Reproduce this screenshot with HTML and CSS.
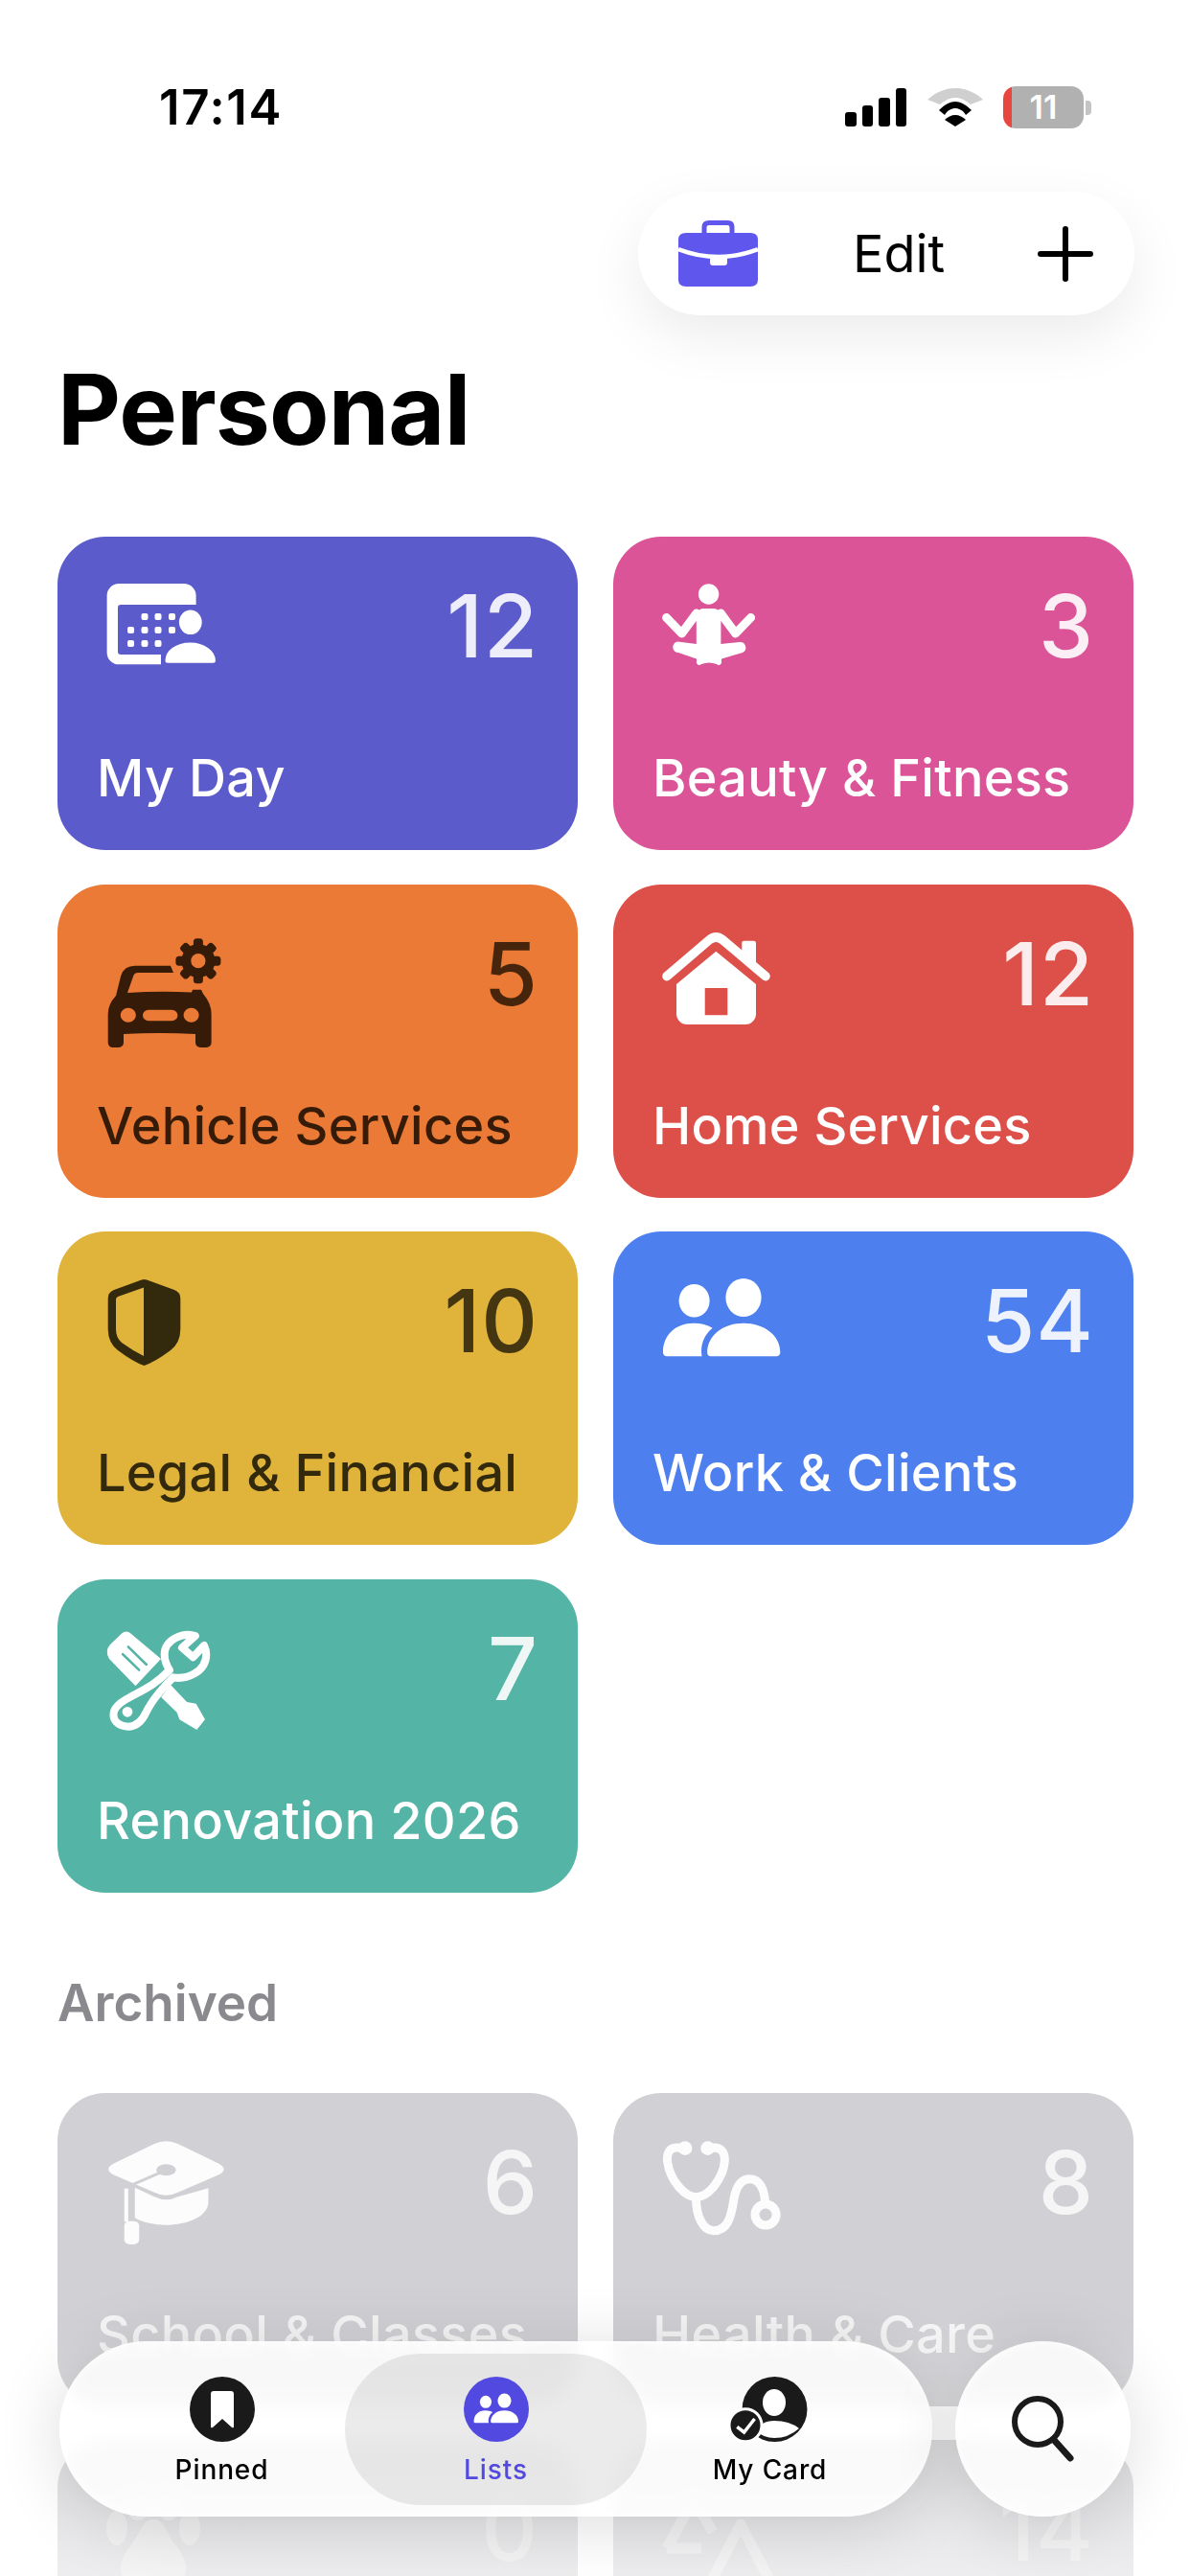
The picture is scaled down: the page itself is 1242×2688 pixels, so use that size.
FILE: index.html
```html
<!DOCTYPE html>
<html lang="en">
<head>
    <meta charset="UTF-8">
    <meta name="viewport" content="width=device-width, initial-scale=1.0">
    <title>Personal</title>
    <link rel="stylesheet" href="styles.css">
</head>
<body>
<div class="page">
    <header class="status">
        <span class="clock">17:14</span>
        <div class="signal"><i></i><i></i><i></i><i></i></div>
        <svg class="wifi" width="58" height="40" viewBox="0 0 58 40">
            <path fill="#cfcfcf" d="M0 12 C10 3 20 0 29 0 C38 0 48 3 58 12 L45 17 C38 11 33 10 29 10 C25 10 20 11 13 17Z"/>
            <path d="M12 23 C18 17 24 14 29 14 C34 14 40 17 46 23 L40 28 C37 23 33 21 29 21 C25 21 21 23 18 28Z"/>
            <path d="M29 28 C33 28 37 30 40 33 L29 40 L18 33 C21 30 25 28 29 28Z"/>
        </svg>
        <div class="battery"><span>11</span></div>
        <div class="battery-nub"></div>
    </header>

    <div class="toolbar">
        <div class="toolbar-pill">
            <svg class="case" width="83" height="69" viewBox="0 0 83 69">
                <path fill="none" stroke="#5f56ee" stroke-width="5" d="M27 14 V7 Q27 2.5 32 2.5 H51 Q56 2.5 56 7 V14"/>
                <path fill="#5f56ee" d="M0 20 Q0 13 8 13 H75 Q83 13 83 20 V62 Q83 69 75 69 H8 Q0 69 0 62Z"/>
                <path fill="none" stroke="#fff" stroke-width="4.5" d="M0 30 Q41.5 46 83 30"/>
                <rect x="33" y="36" width="18" height="11" rx="3" fill="#fff"/>
            </svg>
            <span class="edit">Edit</span>
            <svg class="plus" width="58" height="58" viewBox="0 0 58 58">
                <path fill="none" stroke="#000" stroke-width="6" stroke-linecap="round" d="M29 3 V55 M3 29 H55"/>
            </svg>
        </div>
    </div>

    <h1>Personal</h1>

    <section class="grid">
        <div class="card indigo">
            <div class="card-top">
                <svg class="icon" viewBox="0 0 150 130">
                    <path fill="currentColor" d="M24 9 H92 a12.6 12.6 0 0 1 12.6 12.6 V31 H26 a3 3 0 0 0 -3 3 V80 a3 3 0 0 0 3 3 H68 V93.3 H24 a12.4 12.4 0 0 1 -12.4 -12.4 V21.4 A12.4 12.4 0 0 1 24 9Z"/>
                    <g fill="currentColor">
                        <rect x="47.5" y="40" width="7" height="7" rx="2"/><rect x="61.5" y="40" width="7" height="7" rx="2"/><rect x="76" y="40" width="7" height="7" rx="2"/>
                        <rect x="33" y="54" width="7" height="7" rx="2"/><rect x="47.5" y="54" width="7" height="7" rx="2"/><rect x="61.5" y="54" width="7" height="7" rx="2"/><rect x="76" y="54" width="7" height="7" rx="2"/>
                        <rect x="33" y="68" width="7" height="7" rx="2"/><rect x="47.5" y="68" width="7" height="7" rx="2"/><rect x="61.5" y="68" width="7" height="7" rx="2"/>
                    </g>
                    <ellipse cx="98.8" cy="49.3" rx="13.4" ry="14.3" fill="currentColor" class="halo"/>
                    <path fill="currentColor" class="halo" d="M75 93.3 a4 4 0 0 1 -4 -4 C71 78 83 69 98.5 69 C114 69 126.4 78 126.4 89.3 a4 4 0 0 1 -4 4Z"/>
                </svg>
                <span class="count">12</span>
            </div>
            <span class="label">My Day</span>
        </div>

        <div class="card pink">
            <div class="card-top">
                <svg class="icon" viewBox="0 0 150 130">
                    <circle cx="59.6" cy="20" r="10.7" fill="currentColor"/>
                    <path fill="none" stroke="currentColor" stroke-width="9" stroke-linecap="round" stroke-linejoin="round" d="M15.6 44.5 L31.5 61 L47 40 M103.6 44.5 L87.7 61 L72.2 40"/>
                    <path fill="currentColor" d="M46.8 40 Q50 35 54 35 H65 Q69 35 72.4 40 V72 L92 70 a5.8 5.8 0 0 1 3 11 L73 87.5 V90 a3 3 0 0 1 -5 3 Q60 90 52 93 a3 3 0 0 1 -5 -3 V87.5 L28 81 a5.8 5.8 0 0 1 -1 -11.5 L46.8 72Z"/>
                </svg>
                <span class="count">3</span>
            </div>
            <span class="label">Beauty &amp; Fitness</span>
        </div>

        <div class="card orange">
            <div class="card-top">
                <svg class="icon" viewBox="0 0 150 130">
                    <g fill="currentColor">
                        <rect x="101.9" y="16.2" width="10" height="47" rx="3.5"/>
                        <rect x="101.9" y="16.2" width="10" height="47" rx="3.5" transform="rotate(45 106.9 39.7)"/>
                        <rect x="101.9" y="16.2" width="10" height="47" rx="3.5" transform="rotate(90 106.9 39.7)"/>
                        <rect x="101.9" y="16.2" width="10" height="47" rx="3.5" transform="rotate(135 106.9 39.7)"/>
                        <circle cx="106.9" cy="39.7" r="17.5"/>
                    </g>
                    <circle cx="106.9" cy="39.7" r="7.6" class="hole"/>
                    <path fill="currentColor" fill-rule="evenodd" d="M21 76 L26 56 Q29 44.7 41 44.7 H78 L81 52 H44 Q40 52 39 56 L33 73 Q66 71 100 72.5 L101 69.7 H110 L112 74 Q120.6 84 120.6 95 V125 a5 5 0 0 1 -5 5 H109 a5 5 0 0 1 -5 -5 V116 Q66 114 29 116 V125 a5 5 0 0 1 -5 5 H18 a5 5 0 0 1 -5.3 -5 V95 Q12.7 85 21 76Z M33.8 88.8 a8 7.5 0 1 0 .01 0Z M99.6 88.8 a8 7.5 0 1 0 .01 0Z M55 90.7 H79.4 a6 5.8 0 0 1 0 11.6 H55 a6 5.8 0 0 1 0 -11.6Z"/>
                </svg>
                <span class="count">5</span>
            </div>
            <span class="label">Vehicle Services</span>
        </div>

        <div class="card red">
            <div class="card-top">
                <svg class="icon" viewBox="0 0 150 130">
                    <path fill="none" stroke="currentColor" stroke-width="9.5" stroke-linecap="round" stroke-linejoin="round" d="M16 55.7 L60 18 Q67.3 12 74.6 18 L119 55.7"/>
                    <path fill="currentColor" d="M94.3 24 V21 Q94.3 18.7 97 18.7 H106.5 Q109 18.7 109 21 V44 L94.3 32Z"/>
                    <path fill="currentColor" fill-rule="evenodd" d="M67.3 29.7 L109 64 V95 a11 11 0 0 1 -11 11 H37 a11 11 0 0 1 -11 -11 V64Z M55.7 68 V96.3 H79.3 V68Z"/>
                </svg>
                <span class="count">12</span>
            </div>
            <span class="label">Home Services</span>
        </div>

        <div class="card yellow">
            <div class="card-top">
                <svg class="icon" viewBox="0 0 150 130">
                    <path fill="currentColor" fill-rule="evenodd" d="M50.3 10 Q53 10 56 11.5 L82 21 Q88.3 23.5 88.3 30 V62 Q88.3 76 78 84 Q62 96 50.3 100 Q39 96 23 84 Q12.7 76 12.7 62 V30 Q12.7 23.5 19 21 L45 11.5 Q48 10 50.3 10Z M50 18.5 L23 28 Q21 29 21 31 V62 Q21 71 27 76 Q38 84 50 90Z"/>
                </svg>
                <span class="count">10</span>
            </div>
            <span class="label">Legal &amp; Financial</span>
        </div>

        <div class="card blue">
            <div class="card-top">
                <svg class="icon" viewBox="0 0 150 130">
                    <g id="people" fill="currentColor">
                        <ellipse cx="44.6" cy="32.3" rx="16" ry="17.3"/>
                        <ellipse cx="96" cy="29" rx="18.6" ry="20"/>
                        <path d="M62 90.3 a4 4 0 0 1 -3.8 -4 C58.2 68 75 55.7 96 55.7 C117 55.7 134.3 68 134.3 86 a4 4 0 0 1 -4 4.3Z"/>
                        <path d="M12 86 C12 68 25 55.7 44 55.7 C52 55.7 58 57.5 63.6 60.7 C55 68 50.5 78 52.5 90.3 H16 a4 4 0 0 1 -4 -4.3Z"/>
                    </g>
                </svg>
                <span class="count">54</span>
            </div>
            <span class="label">Work &amp; Clients</span>
        </div>

        <div class="card teal">
            <div class="card-top">
                <svg class="icon" viewBox="0 0 150 130">
                    <path fill="currentColor" d="M15 28 L27 16.5 Q32 12.5 37 17 L68 43 L41.4 71.3 L14 43 Q9 35 15 28Z"/>
                    <path fill="currentColor" d="M77.8 69.7 L95 88 L104.6 89.7 L114 106.3 L105.3 117 L87.3 106.3 L84.7 99 L68.2 83Z"/>
                    <path fill="none" class="cut" stroke-width="2.5" stroke-linecap="round" d="M28 38 L45.2 54.7 M33.8 30.3 L52.9 49"/>
                    <g transform="translate(-60 -57) scale(.3827 .3333)">
                        <path class="wrench" stroke-linejoin="round" d="M428 228 C395 215 345 240 344 285 C344 310 352 325 358 335 C320 380 290 395 250 420 C215 440 205 460 205 475 C205 500 225 512 245 512 C270 512 285 490 295 465 C310 430 335 395 368 358 C400 365 458 345 458 285 C458 275 455 265 452 258 L422 295 L392 265Z"/>
                        <ellipse cx="243" cy="466" rx="14" ry="16" fill="currentColor"/>
                    </g>
                </svg>
                <span class="count">7</span>
            </div>
            <span class="label">Renovation 2026</span>
        </div>
    </section>

    <h2>Archived</h2>

    <section class="grid">
        <div class="card grey">
            <div class="card-top">
                <svg class="icon" viewBox="0 0 150 130">
                    <g transform="translate(-100 -63) scale(.408 .3333)" fill="currentColor">
                        <path d="M395 228 Q425 212 455 228 L560 290 Q585 307 560 325 L455 380 Q425 398 395 380 L290 325 Q265 307 290 290Z"/>
                        <path class="cut-line" d="M425 310 L335 358"/>
                        <ellipse cx="425" cy="310" rx="25" ry="18" class="hole"/>
                        <path d="M345 365 L395 394 Q425 412 455 394 L533 367 V410 C533 455 480 482 425 482 C395 482 365 475 345 460Z"/>
                        <rect x="318" y="368" width="10" height="104"/>
                        <rect x="318" y="470" width="38" height="73" rx="14"/>
                    </g>
                </svg>
                <span class="count">6</span>
            </div>
            <span class="label">School &amp; Classes</span>
        </div>

        <div class="card grey">
            <div class="card-top">
                <svg class="icon" viewBox="0 0 150 130">
                    <g transform="translate(-78 -63) scale(.408 .3333)">
                        <path class="line" d="M262 240 H255 C235 240 230 260 232 285 C238 340 275 395 305 395 C340 395 375 330 378 285 C380 255 370 240 350 240 M305 395 C305 460 325 500 350 500 C385 500 395 460 402 400 C408 360 420 338 442 338 C468 338 480 370 482 415"/>
                        <ellipse class="line" cx="483" cy="450" rx="27" ry="33"/>
                        <ellipse cx="277" cy="242" rx="18" ry="22" fill="currentColor"/>
                        <ellipse cx="335" cy="242" rx="18" ry="22" fill="currentColor"/>
                    </g>
                </svg>
                <span class="count">8</span>
            </div>
            <span class="label">Health &amp; Care</span>
        </div>

        <div class="card grey under">
            <div class="card-top">
                <svg class="icon" viewBox="0 0 150 130">
                    <g fill="currentColor">
                        <ellipse cx="22" cy="52" rx="11" ry="18"/>
                        <ellipse cx="98" cy="52" rx="11" ry="18"/>
                        <ellipse cx="44" cy="27" rx="12" ry="17"/>
                        <ellipse cx="76" cy="27" rx="12" ry="17"/>
                        <path d="M60 43 C72 43 74 58 82 68 C90 78 94 86 94 94 C94 108 82 114 60 114 C38 114 26 108 26 94 C26 86 30 78 38 68 C46 58 48 43 60 43Z"/>
                    </g>
                </svg>
                <span class="count">0</span>
            </div>
        </div>

        <div class="card grey under">
            <div class="card-top">
                <svg class="icon" viewBox="0 0 150 130">
                    <path class="tent" d="M16 73 L44 22 L64 56 M16 73 H52 M93 48 L62 108 H124Z"/>
                </svg>
                <span class="count">14</span>
            </div>
        </div>
    </section>

    <div class="fade"></div>

    <nav class="tabbar">
        <div class="tabs">
            <div class="tab">
                <svg width="68" height="68" viewBox="0 0 68 68">
                    <circle cx="34" cy="34" r="34" fill="#1a1a1a"/>
                    <path fill="#fff" d="M22 18 Q22 15 25 15 H43 Q46 15 46 18 V52 Q46 54 44 53 L34 44 L24 53 Q22 54 22 52Z"/>
                </svg>
                <span>Pinned</span>
            </div>
            <div class="tab tab-on">
                <svg width="68" height="68" viewBox="0 0 68 68">
                    <circle cx="34" cy="34" r="34" fill="#5249e0"/>
                    <use href="#people" transform="translate(6 14) scale(.38)" color="#fff"/>
                </svg>
                <span>Lists</span>
            </div>
            <div class="tab">
                <svg width="90" height="68" viewBox="0 0 90 68">
                    <circle cx="49.5" cy="34" r="34" fill="#1a1a1a"/>
                    <ellipse cx="49" cy="27" rx="12" ry="14" fill="#fff"/>
                    <path fill="#fff" d="M31 57 Q35 46 49 46 Q65 46 75 54 Q64 64 49 64 Q38 64 31 57Z"/>
                    <circle cx="19" cy="50.7" r="17" fill="#1a1a1a" stroke="#fff" stroke-width="3"/>
                    <path fill="none" stroke="#fff" stroke-width="3.5" d="M10.3 52.3 L17.6 58 L28.6 44"/>
                </svg>
                <span>My Card</span>
            </div>
        </div>
        <div class="search">
            <svg width="66" height="70" viewBox="0 0 66 70">
                <circle cx="27" cy="27" r="24" fill="none" stroke="#1a1a1a" stroke-width="6"/>
                <path fill="none" stroke="#1a1a1a" stroke-width="7" stroke-linecap="round" d="M44 46 L61 65"/>
            </svg>
        </div>
    </nav>
</div>
</body>
</html>
```

FILE: styles.css
```css
* {
    box-sizing: border-box;
}
html, body {
    margin: 0;
    background: #fff;
}
body {
    font-family: Inter, "Liberation Sans", sans-serif;
    color: #000;
}
.page {
    position: relative;
    width: 1242px;
    height: 2688px;
    overflow: hidden;
    padding: 0 58px 0 60px;
}

/* status bar */
.status {
    display: flex;
    align-items: flex-end;
    height: 134px;
    padding-left: 106px;
}
.clock {
    font-size: 51px;
    font-weight: 600;
    line-height: 1;
    letter-spacing: 1.6px;
    margin-right: auto;
    margin-bottom: -3px;
}
.signal {
    display: flex;
    align-items: flex-end;
    gap: 6px;
    height: 40px;
    margin-bottom: 2px;
}
.signal i {
    width: 11.5px;
    background: #000;
    border-radius: 3px;
}
.signal i:nth-child(1) { height: 15px; }
.signal i:nth-child(2) { height: 22px; }
.signal i:nth-child(3) { height: 30px; }
.signal i:nth-child(4) { height: 40px; }
.wifi {
    margin: 0 21px 2px 22px;
}
.battery {
    width: 84px;
    height: 44px;
    border-radius: 13px;
    background: linear-gradient(90deg, #e8463f 9px, #b1b1b1 9px);
    color: #fff;
    font-size: 34px;
    font-weight: 600;
    line-height: 44px;
    text-align: center;
}
.battery-nub {
    width: 6px;
    height: 15px;
    margin: 0 45px 14px 2px;
    background: #c4c4c4;
    border-radius: 0 4px 4px 0;
}

/* toolbar */
.toolbar {
    display: flex;
    justify-content: flex-end;
    margin-top: 66px;
}
.toolbar-pill {
    display: flex;
    align-items: center;
    width: 518px;
    height: 129px;
    padding: 0 43px 0 42px;
    background: #fff;
    border-radius: 65px;
    box-shadow: 0 22px 60px rgba(0, 0, 0, .08);
}
.edit {
    font-size: 54px;
    line-height: 1;
    margin-left: 99px;
    margin-right: auto;
}

h1 {
    margin: 42px 0 0;
    font-size: 102px;
    font-weight: 700;
    line-height: 112px;
    letter-spacing: -.9px;
}

.grid {
    display: grid;
    grid-template-columns: 543px 543px;
    grid-auto-rows: 327px;
    gap: 35.5px 37px;
    margin-top: 77px;
}
.card {
    display: flex;
    flex-direction: column;
    padding: 40px 41px 48px 40px;
    border-radius: 50px;
    background: var(--bg);
    color: #fff;
}
.card-top {
    display: flex;
    justify-content: space-between;
    height: 130px;
}
.icon {
    width: 150px;
    height: 130px;
    overflow: visible;
}
.count {
    margin-top: 8px;
    font-size: 91px;
    font-weight: 500;
    line-height: 1;
    letter-spacing: 1px;
    opacity: .9;
}
.label {
    margin-top: auto;
    padding-left: 1px;
    font-size: 54px;
    font-weight: 500;
    line-height: 1;
    letter-spacing: .3px;
}
.indigo { --bg: #5b5bcc; }
.pink { --bg: #da5497; }
.orange { --bg: #ea7a35; color: #361c08; }
.red { --bg: #dd5049; }
.yellow { --bg: #e0b33b; color: #33290c; }
.blue { --bg: #4d80ee; }
.teal { --bg: #54b4a5; }
.grey { --bg: #d1d1d5; }
.grey .count,
.grey .label {
    opacity: .8;
}
.grey .icon {
    opacity: .95;
}
.under .count,
.under .icon {
    opacity: .4;
}

/* icon details that need the card colour */
.halo {
    stroke: var(--bg);
    stroke-width: 3;
}
.hole {
    fill: var(--bg);
}
.cut {
    stroke: var(--bg);
}
.cut-line {
    fill: none;
    stroke: var(--bg);
    stroke-width: 3;
    vector-effect: non-scaling-stroke;
}
.wrench {
    fill: var(--bg);
    stroke: currentColor;
    stroke-width: 8;
    vector-effect: non-scaling-stroke;
}
.line {
    fill: none;
    stroke: currentColor;
    stroke-width: 9;
    stroke-linecap: round;
    vector-effect: non-scaling-stroke;
}
.tent {
    fill: none;
    stroke: currentColor;
    stroke-width: 11;
    stroke-linejoin: round;
}

h2 {
    margin: 89px 0 0;
    font-size: 53px;
    font-weight: 600;
    line-height: 1;
    color: #8a8a8e;
}
h2 + .grid {
    margin-top: 67px;
}

/* bottom bar */
.fade {
    position: absolute;
    left: 0;
    right: 0;
    bottom: 0;
    height: 268px;
    background: linear-gradient(rgba(255, 255, 255, 0), rgba(255, 255, 255, .62));
}
.tabbar {
    position: absolute;
    left: 62px;
    right: 62px;
    bottom: 62px;
    display: flex;
    justify-content: space-between;
}
.tabs,
.search {
    height: 183px;
    background: rgba(255, 255, 255, .82);
    -webkit-backdrop-filter: blur(10px);
    backdrop-filter: blur(10px);
    box-shadow: 0 8px 70px rgba(0, 0, 0, .14), inset 0 0 12px #fff;
}
.tabs {
    display: grid;
    grid-template-columns: repeat(3, 286px);
    justify-content: center;
    align-items: start;
    width: 911px;
    padding-top: 37px;
    border-radius: 92px;
}
.tab {
    display: flex;
    flex-direction: column;
    align-items: center;
    gap: 12px;
    font-size: 28px;
    font-weight: 500;
    line-height: 34px;
    letter-spacing: .9px;
}
.tab svg {
    display: block;
}
.tab-on {
    height: 158px;
    margin: -24px -14.5px 0;
    padding-top: 24px;
    background: rgba(0, 0, 0, .08);
    border-radius: 79px;
    color: #5249e0;
}
.search {
    display: flex;
    align-items: center;
    justify-content: center;
    width: 183px;
    border-radius: 50%;
}
```
